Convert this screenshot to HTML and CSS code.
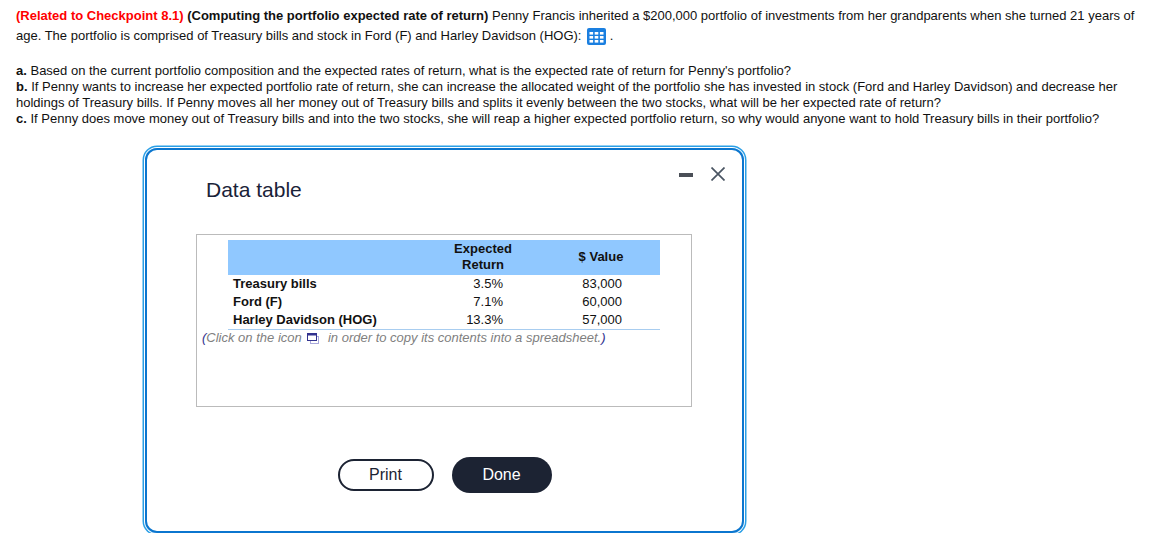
FILE: index.html
```html
<!DOCTYPE html>
<html lang="en">
<head>
	<meta charset="UTF-8">
	<title>Data table</title>
	<link rel="stylesheet" href="styles.css">
</head>
<body>
<div class="question">
	<p class="intro"><span class="related">(Related to Checkpoint 8.1)</span> <b>(Computing the portfolio expected rate of return)</b> Penny Francis inherited a $200,000 portfolio of investments from her grandparents when she turned 21 years of age. The portfolio is comprised of Treasury bills and stock in Ford (F) and Harley Davidson (HOG):
		<svg class="grid-icon" width="19" height="17" viewBox="0 0 19 17">
			<rect x="0" y="0" width="19" height="17" rx="2" fill="#1a7fe0"/>
			<rect x="2.5" y="4" width="3.6" height="2.6" fill="#fff"/>
			<rect x="7.7" y="4" width="3.6" height="2.6" fill="#fff"/>
			<rect x="12.9" y="4" width="3.6" height="2.6" fill="#fff"/>
			<rect x="2.5" y="8" width="3.6" height="2.6" fill="#fff"/>
			<rect x="7.7" y="8" width="3.6" height="2.6" fill="#fff"/>
			<rect x="12.9" y="8" width="3.6" height="2.6" fill="#fff"/>
			<rect x="2.5" y="12" width="3.6" height="2.6" fill="#fff"/>
			<rect x="7.7" y="12" width="3.6" height="2.6" fill="#fff"/>
			<rect x="12.9" y="12" width="3.6" height="2.6" fill="#fff"/>
		</svg> .</p>
	<p class="parts"><b>a.</b> Based on the current portfolio composition and the expected rates of return, what is the expected rate of return for Penny's portfolio?<br>
	<b>b.</b> If Penny wants to increase her expected portfolio rate of return, she can increase the allocated weight of the portfolio she has invested in stock (Ford and Harley Davidson) and decrease her holdings of Treasury bills. If Penny moves all her money out of Treasury bills and splits it evenly between the two stocks, what will be her expected rate of return?<br>
	<b>c.</b> If Penny does move money out of Treasury bills and into the two stocks, she will reap a higher expected portfolio return, so why would anyone want to hold Treasury bills in their portfolio?</p>
</div>

<div class="dialog">
	<div class="window-btns">
		<span class="minimize"></span>
		<svg width="14" height="14" viewBox="0 0 14 14"><path d="M0.5 0.5 L13.5 13.5 M13.5 0.5 L0.5 13.5" stroke="#4a5563" stroke-width="1.7" fill="none"/></svg>
	</div>
	<h2 class="dialog-title">Data table</h2>
	<div class="panel">
		<table class="data">
			<tr class="head">
				<th class="name"></th>
				<th class="ret">Expected<br>Return</th>
				<th class="val">$ Value</th>
			</tr>
			<tr><td class="name">Treasury bills</td><td class="ret">3.5%</td><td class="val">83,000</td></tr>
			<tr><td class="name">Ford (F)</td><td class="ret">7.1%</td><td class="val">60,000</td></tr>
			<tr class="last"><td class="name">Harley Davidson (HOG)</td><td class="ret">13.3%</td><td class="val">57,000</td></tr>
		</table>
		<p class="hint"><span class="paren">(</span>Click on the icon
			<svg class="copy-icon" width="12" height="11" viewBox="0 0 12 11">
				<rect x="3.5" y="3.5" width="8" height="7" fill="#fff" stroke="#a9a9dc"/>
				<rect x="0.5" y="0.5" width="9" height="7" fill="#fff" stroke="#33338f"/>
				<rect x="0.5" y="0.5" width="9" height="2" fill="#33338f"/>
			</svg>
			in order to copy its contents into a spreadsheet.<span class="paren">)</span></p>
	</div>
	<div class="actions">
		<button class="btn print">Print</button>
		<button class="btn done">Done</button>
	</div>
</div>
</body>
</html>
```

FILE: styles.css
```css
body{
	margin: 0;
	font-family: "Liberation Sans", Arial, sans-serif;
	color: #111;
	background-color: #fff;
}
p{
	margin: 0;
}
.question{
	padding: 8px 16px 0 16px;
	width: 1125px;
	font-size: 13px;
	line-height: 16px;
}
.intro{
	margin-bottom: 18px;
}
.related{
	color: #f00;
	font-weight: bold;
}
.grid-icon{
	vertical-align: -5px;
	margin: 4px 0 0 2px;
}
.dialog{
	box-sizing: border-box;
	width: 599px;
	height: 385px;
	margin: 21px 0 0 145px;
	padding: 0 51px;
	border: 2px solid #0b76cf;
	border-radius: 12px;
	box-shadow: 0 0 0 1px #fff, 0 0 0 2.5px #2a9fe6;
	position: relative;
}
.window-btns{
	position: absolute;
	top: 17px;
	right: 17px;
	display: flex;
	align-items: center;
	gap: 18px;
}
.minimize{
	width: 14px;
	height: 4px;
	margin-top: 2px;
	background-color: #4a4f57;
}
.dialog-title{
	margin: 27px 0 0 8px;
	font-size: 21px;
	line-height: 26px;
	font-weight: normal;
	color: #1a2238;
}
.panel{
	box-sizing: border-box;
	width: 496px;
	height: 173px;
	margin: 31px 0 0 -2px;
	padding: 5px 31px 0 31px;
	border: 1px solid #bbb;
}
.data{
	border-collapse: collapse;
	table-layout: fixed;
	width: 432px;
	font-size: 13px;
	color: #111;
}
.data th, .data td{
	box-sizing: border-box;
	padding: 0;
	height: 18px;
	line-height: 16px;
}
.data .head th{
	height: 35px;
	padding-bottom: 2px;
	background-color: #90c8ff;
	text-align: center;
}
.last td{
	border-bottom: 1px solid #a8cdf0;
}
.data .name{
	width: 218px;
	padding-left: 5px;
	text-align: left;
	font-weight: bold;
}
.data .ret{
	width: 74px;
	padding-right: 17px;
	text-align: right;
}
.data .val{
	width: 140px;
	padding-right: 38px;
	text-align: right;
}
.data .head .ret{
	padding-right: 0;
}
.data .head .val{
	padding-left: 22px;
	padding-right: 0;
}
.hint{
	margin-left: -26px;
	font-size: 13px;
	line-height: 16px;
	font-style: italic;
	color: #808080;
}
.paren{
	color: #33338f;
}
.copy-icon{
	vertical-align: -2px;
	margin: 0 5px 0 2px;
}
.actions{
	display: flex;
	justify-content: center;
	align-items: center;
	gap: 18px;
	margin-top: 50px;
}
.btn{
	font-family: inherit;
	font-size: 16px;
	border-radius: 18px;
}
.print{
	width: 96px;
	height: 32px;
	border: 2px solid #1c2333;
	background-color: #fff;
	color: #1c2333;
}
.done{
	width: 100px;
	height: 36px;
	border: none;
	background-color: #1c2333;
	color: #fff;
}
```
